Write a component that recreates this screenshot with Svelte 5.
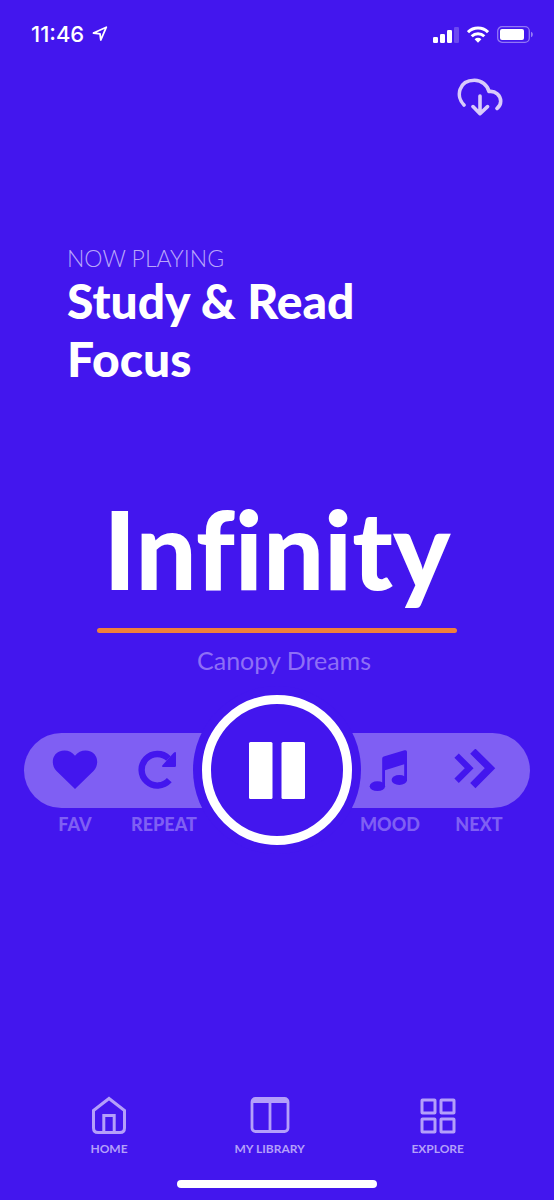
<script>
  let playing = $state(true);
</script>

<div class="screen">
  <header class="status">
    <div class="clock">
      <span>11:46</span>
      <svg width="16" height="16" viewBox="0 0 16 16" aria-hidden="true">
        <path d="M1.5 7 14.3 1.2 8.8 14 8 7.8Z" fill="none" stroke="#fff" stroke-width="1.8" stroke-linejoin="round" />
      </svg>
    </div>
    <div class="signals">
      <svg width="26" height="17" viewBox="0 0 26 17" aria-hidden="true">
        <g fill="#fff">
          <rect x="0" y="11" width="5" height="6" rx="1.3" />
          <rect x="7" y="8" width="5" height="9" rx="1.3" />
          <rect x="14" y="4" width="5" height="13" rx="1.3" />
          <rect x="21" y="1" width="5" height="16" rx="1.3" opacity=".22" />
        </g>
      </svg>
      <svg width="22" height="17" viewBox="0 0 22 17" aria-hidden="true">
        <g fill="none" stroke="#fff" stroke-width="3">
          <path d="M1 6.2a14.3 14.3 0 0 1 20 0" />
          <path d="M4.7 10.200a9 9 0 0 1 12.6 0" />
        </g>
        <path d="M7.6 13.200a4.9 4.9 0 0 1 6.800 0L11 16.800Z" fill="#fff" />
      </svg>
      <svg width="36" height="17" viewBox="0 0 36 17" aria-hidden="true">
        <rect x=".7" y=".7" width="31.6" height="15.6" rx="4.4" fill="none" stroke="#fff" stroke-opacity=".42" stroke-width="1.3" />
        <rect x="3" y="3" width="24" height="11" rx="2" fill="#fff" />
        <path d="M34 5.8c2.4.8 2.4 4.6 0 5.4Z" fill="#fff" opacity=".45" />
      </svg>
    </div>
  </header>

  <div class="tools">
    <button aria-label="Download">
      <svg width="46" height="38" viewBox="0 0 46 38" aria-hidden="true">
        <g fill="none" stroke="#d9cbfb" stroke-width="3.6" stroke-linecap="round" stroke-linejoin="round">
          <path d="M7 27C-1.500 18.500 1.500 2.300 17.500 2.300 24.500 2.300 30.500 7 32 13.500 38.500 12.500 43.700 17.500 43.700 23.200 43.700 26.500 42.200 28.800 40 30.500" />
          <path d="M23 18V35.500M16 28.600 23 35.700 30.500 28.600" />
        </g>
      </svg>
    </button>
  </div>

  <section class="playlist">
    <p>NOW PLAYING</p>
    <h1>Study &amp; Read<br />Focus</h1>
  </section>

  <section class="track">
    <h2>Infinity</h2>
    <div class="line"></div>
    <p>Canopy Dreams</p>
  </section>

  <section class="controls">
    <div class="pill"></div>
    <button class="action fav">
      <span class="glyph">
        <svg width="46" height="40" viewBox="0 0 46 40" aria-hidden="true">
          <path d="M23 39 4.500 21C-1.600 14.500.200 4.600 7.400 1.600 13-.800 19.200 1 23 5.800 26.800 1 33-.800 38.600 1.600 45.800 4.600 47.600 14.500 41.500 21Z" fill="#4316ee" />
        </svg>
      </span>
      <span>FAV</span>
    </button>
    <button class="action repeat">
      <span class="glyph">
        <svg width="52" height="40" viewBox="0 0 52 40" aria-hidden="true">
          <path d="M31.300 30.200A15.800 15.800 0 1 1 30.500 8.500" fill="none" stroke="#4316ee" stroke-width="6.400" />
          <path d="M38 3.500V15.800Q38 17 36.800 17H25.500Q22.800 17 24.700 15L35.500 3Q38 .800 38 3.500Z" fill="#4316ee" />
        </svg>
      </span>
      <span>REPEAT</span>
    </button>
    <button class="play" aria-label={playing ? 'Pause' : 'Play'} onclick={() => (playing = !playing)}>
      <svg width="58" height="58" viewBox="0 0 58 58" aria-hidden="true">
        {#if playing}
          <rect x="1" y="1" width="23.500" height="57" rx="1.500" fill="#fff" />
          <rect x="33.500" y="1" width="23.500" height="57" rx="1.500" fill="#fff" />
        {:else}
          <path d="M10 1 54 29 10 57Z" fill="#fff" />
        {/if}
      </svg>
    </button>
    <button class="action mood">
      <span class="glyph">
        <svg width="42" height="44" viewBox="0 0 42 44" aria-hidden="true">
          <path d="M13.200 38V10.500Q13.200 9 14.700 8.500L35.500 2.300Q38 1.600 38 4V33H35.200V16.200L16 22.200V38Z" fill="#4316ee" />
          <ellipse cx="8.400" cy="38.200" rx="7.700" ry="4.900" fill="#4316ee" />
          <ellipse cx="30.300" cy="32" rx="7.700" ry="4.900" fill="#4316ee" />
        </svg>
      </span>
      <span>MOOD</span>
    </button>
    <button class="action next">
      <span class="glyph">
        <svg width="50" height="42" viewBox="0 0 50 42" aria-hidden="true">
          <g fill="none" stroke="#4316ee">
            <path d="M2.600 6.600 15.200 19.200 2.600 31.800" stroke-width="6.200" />
            <path d="M18.800 2.200 36 19.200 18.800 36.600" stroke-width="7.400" />
          </g>
        </svg>
      </span>
      <span>NEXT</span>
    </button>
  </section>

  <nav>
    <a href="#home">
      <svg width="38" height="40" viewBox="0 0 38 40" aria-hidden="true">
        <g fill="none" stroke="#b49ffa" stroke-width="3">
          <path d="M3.500 15.500 19 3.500 34.500 15.500V33Q34.500 37.500 30 37.500H8Q3.500 37.500 3.500 33Z" />
          <path d="M13.800 37V20.500H24.200V37" />
        </g>
      </svg>
      <span>HOME</span>
    </a>
    <a href="#library">
      <svg width="40" height="40" viewBox="0 0 40 40" aria-hidden="true">
        <rect x="2" y="3.500" width="36" height="33" rx="3.500" fill="none" stroke="#b49ffa" stroke-width="2.800" />
        <path d="M2 4H38V8H2ZM18.600 6H21.400V37H18.600Z" fill="#b49ffa" />
      </svg>
      <span>MY LIBRARY</span>
    </a>
    <a href="#explore">
      <svg width="38" height="40" viewBox="0 0 38 40" aria-hidden="true">
        <g fill="none" stroke="#b49ffa" stroke-width="3">
          <rect x="3" y="5" width="13" height="13" rx=".500" />
          <rect x="22" y="5" width="13" height="13" rx=".500" />
          <rect x="3" y="24" width="13" height="13" rx=".500" />
          <rect x="22" y="24" width="13" height="13" rx=".500" />
        </g>
      </svg>
      <span>EXPLORE</span>
    </a>
  </nav>
  <div class="indicator"></div>
</div>

<style>
  :global(body) {
    margin: 0;
    background: #4316ee;
  }
  .screen {
    box-sizing: border-box;
    min-height: 100vh;
    display: flex;
    flex-direction: column;
    background: #4316ee;
    color: #fff;
    font-family: Lato, "Liberation Sans", sans-serif;
    font-variant-ligatures: none;
  }
  button {
    padding: 0;
    border: 0;
    background: none;
    color: inherit;
    font: inherit;
    cursor: pointer;
  }
  svg {
    display: block;
  }
  h1,
  h2,
  p {
    margin: 0;
  }
  .status {
    display: flex;
    justify-content: space-between;
    align-items: center;
    height: 28px;
    padding: 20px 21px 0 31px;
    font: 500 22px/28px Inter, sans-serif;
  }
  .clock,
  .signals {
    display: flex;
    align-items: center;
    gap: 8px;
  }
  .tools {
    display: flex;
    justify-content: flex-end;
    padding: 30px 51px 0 0;
  }
  .playlist {
    padding: 128px 67px 0;
  }
  .playlist p {
    font-size: 23px;
    line-height: 28px;
    font-weight: 300;
    color: #b9a6fb;
  }
  h1 {
    font-size: 48px;
    line-height: 58px;
    font-weight: 900;
  }
  .track {
    display: flex;
    flex-direction: column;
    align-items: center;
    padding: 96px 97px 0;
    text-align: center;
  }
  h2 {
    font-size: 108px;
    line-height: 128px;
    font-weight: 900;
  }
  .line {
    align-self: stretch;
    height: 5px;
    margin-top: 16px;
    border-radius: 3px;
    background: #f0803a;
  }
  .track p {
    margin-top: 12px;
    padding-left: 14px;
    font-size: 25px;
    line-height: 30px;
    color: #8e6ff6;
  }
  .controls {
    display: grid;
    grid-template-columns: 102fr 76fr 150px 76fr 102fr;
    align-items: center;
    margin: 20px 24px 0;
  }
  .pill {
    grid-area: 1 / 1 / 2 / 6;
    height: 75px;
    border-radius: 38px;
    background: #7f5ff3;
  }
  .action {
    grid-row: 1;
    display: flex;
    flex-direction: column;
    align-items: center;
    align-self: start;
    gap: 5px;
    margin-top: 37px;
    margin-bottom: -10px;
    color: #7f5ff3;
    font-size: 18px;
    line-height: 24px;
    font-weight: 900;
  }
  .action .glyph {
    display: flex;
    align-items: center;
    height: 75px;
  }
  .fav {
    grid-column: 1;
  }
  .repeat {
    grid-column: 2;
  }
  .mood {
    grid-column: 4;
  }
  .next {
    grid-column: 5;
  }
  .play {
    grid-area: 1 / 3;
    display: grid;
    place-items: center;
    box-sizing: border-box;
    height: 150px;
    border: 9px solid #fff;
    border-radius: 50%;
    background: #4316ee;
    box-shadow: 0 0 0 9px #4316ee;
  }
  nav {
    display: flex;
    justify-content: space-between;
    margin-top: auto;
    padding: 0 90px;
  }
  nav a {
    display: flex;
    flex-direction: column;
    align-items: center;
    gap: 6px;
    color: #b49ffa;
    font-size: 12px;
    line-height: 16px;
    font-weight: 700;
    text-decoration: none;
  }
  .indicator {
    align-self: center;
    width: 36%;
    height: 8px;
    margin: 23px 0 12px;
    border-radius: 4px;
    background: #fff;
  }
</style>
